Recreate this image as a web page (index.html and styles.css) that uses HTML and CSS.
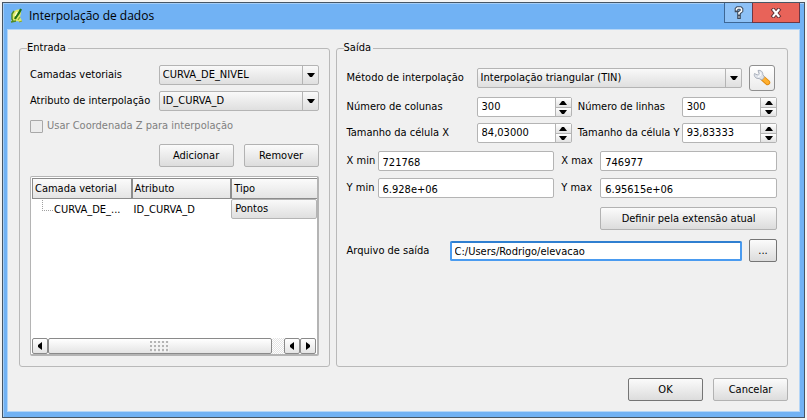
FILE: index.html
```html
<!DOCTYPE html>
<html lang="pt-BR">
<head>
<meta charset="utf-8">
<title>Interpolação de dados</title>
<link rel="stylesheet" href="styles.css">
</head>
<body>
<svg width="0" height="0" class="sprite" aria-hidden="true">
  <symbol id="up" viewBox="0 0 8 4"><path d="M0 4h8L5 0H3z"/></symbol>
  <symbol id="down" viewBox="0 0 8 4"><path d="M0 0h8L5 4H3z"/></symbol>
  <symbol id="left" viewBox="0 0 4 8"><path d="M4 0v8L0 5V3z"/></symbol>
  <symbol id="right" viewBox="0 0 4 8"><path d="M0 0v8l4-3V3z"/></symbol>
</svg>
<main class="window">
  <header class="titlebar">
    <svg class="app-icon" viewBox="0 0 14 16" aria-hidden="true">
      <path d="M3 4l3-2 5-1v4l-1 4 2 4-2 1-3-1-3 1-3 0 1-3 0-4z" fill="#dfe96a"/>
      <path d="M4 3L2 6l0 5 1 2M1 14l5-1" fill="none" stroke="#4f8a26" stroke-width="1.4"/>
      <path d="M11 1L9 5 6 9l-1 2" fill="none" stroke="#1f7012" stroke-width="2.2"/>
      <path d="M7 4L5 8" stroke="#fbfdd0" stroke-width="1.4"/>
      <path d="M8 12l2-3M9 14l3-1" stroke="#86a832" stroke-width="1.2"/>
    </svg>
    <h1 class="title">Interpolação de dados</h1>
    <div class="caption">
      <button type="button" class="cap help" aria-label="Ajuda">
        <svg viewBox="0 0 10 13" width="10" height="13"><path d="M2.500 4.500V3l1-1h3l1 1v2L5 7v1.500M5 10.500v1" fill="none" stroke="#3c4a5c" stroke-width="3.600" stroke-linecap="square"/><path d="M2.500 4.500V3l1-1h3l1 1v2L5 7v1.500M5 10.500v1" fill="none" stroke="#fff" stroke-width="1.600"/></svg>
      </button>
      <button type="button" class="cap close" aria-label="Fechar">
        <svg viewBox="0 0 12 10" width="12" height="10"><path d="M3.500 2l5 6M8.500 2l-5 6" stroke="#5d2f35" stroke-width="4" stroke-linecap="square"/><path d="M3.500 2l5 6M8.500 2l-5 6" stroke="#fff" stroke-width="2.200" stroke-linecap="square"/></svg>
      </button>
    </div>
  </header>
  <form class="content">
    <div class="panels">
      <fieldset class="group">
        <legend>Entrada</legend>
        <div class="input-rows">
          <label for="layer">Camadas vetoriais</label>
          <span class="combo"><select id="layer"><option>CURVA_DE_NIVEL</option></select><svg class="arrow"><use href="#down"/></svg></span>
          <label for="attr">Atributo de interpolação</label>
          <span class="combo"><select id="attr"><option>ID_CURVA_D</option></select><svg class="arrow"><use href="#down"/></svg></span>
        </div>
        <label class="check"><input type="checkbox" disabled>Usar Coordenada Z para interpolação</label>
        <div class="actions">
          <button type="button" class="btn">Adicionar</button>
          <button type="button" class="btn">Remover</button>
        </div>
        <div class="tree">
          <table>
            <thead><tr><th>Camada vetorial</th><th>Atributo</th><th>Tipo</th></tr></thead>
            <tbody><tr><td class="branch">CURVA_DE_...</td><td>ID_CURVA_D</td><td class="type"><select aria-label="Tipo"><option>Pontos</option></select></td></tr></tbody>
          </table>
          <div class="scroll">
            <button type="button" class="step" aria-label="Rolar para a esquerda"><svg><use href="#left"/></svg></button>
            <div class="thumb"><i class="grip"></i></div>
            <div class="track"></div>
            <button type="button" class="step" aria-label="Voltar"><svg><use href="#left"/></svg></button>
            <button type="button" class="step" aria-label="Rolar para a direita"><svg><use href="#right"/></svg></button>
          </div>
        </div>
      </fieldset>
      <fieldset class="group">
        <legend>Saída</legend>
        <div class="row method">
          <label for="method">Método de interpolação</label>
          <span class="combo"><select id="method"><option>Interpolação triangular (TIN)</option></select><svg class="arrow"><use href="#down"/></svg></span>
          <button type="button" class="tool" aria-label="Configurar">
            <svg viewBox="0 0 18 18" width="18" height="18">
              <path d="M10 9.500l4.500 4" stroke="#e08a10" stroke-width="5.400" stroke-linecap="round"/>
              <path d="M10 9.300l4.500 4" stroke="#ffb02e" stroke-width="3.600" stroke-linecap="round"/>
              <path d="M5 1.500L6 4.500 4.500 6 1.500 4.500C.5 7.500 3 10 6 9.500L9 11l2.500-3L9.800 5.500C10 3 8 .8 5 1.500z" fill="#dfe3ea" stroke="#a3a9b5" stroke-width=".9"/>
              <path d="M7.500 3.500L8 6 5 8" fill="none" stroke="#fff"/>
            </svg>
          </button>
        </div>
        <div class="spin-grid">
          <label for="cols">Número de colunas</label>
          <span class="spin"><input id="cols" value="300"><span class="steps"><button type="button" aria-label="Aumentar"><svg><use href="#up"/></svg></button><button type="button" aria-label="Diminuir"><svg><use href="#down"/></svg></button></span></span>
          <label for="lines">Número de linhas</label>
          <span class="spin"><input id="lines" value="300"><span class="steps"><button type="button" aria-label="Aumentar"><svg><use href="#up"/></svg></button><button type="button" aria-label="Diminuir"><svg><use href="#down"/></svg></button></span></span>
          <label for="cellx">Tamanho da célula X</label>
          <span class="spin"><input id="cellx" value="84,03000"><span class="steps"><button type="button" aria-label="Aumentar"><svg><use href="#up"/></svg></button><button type="button" aria-label="Diminuir"><svg><use href="#down"/></svg></button></span></span>
          <label for="celly">Tamanho da célula Y</label>
          <span class="spin"><input id="celly" value="93,83333"><span class="steps"><button type="button" aria-label="Aumentar"><svg><use href="#up"/></svg></button><button type="button" aria-label="Diminuir"><svg><use href="#down"/></svg></button></span></span>
        </div>
        <div class="extent-grid">
          <label for="xmin">X min</label><input class="field" id="xmin" value="721768">
          <label for="xmax">X max</label><input class="field" id="xmax" value="746977">
          <label for="ymin">Y min</label><input class="field" id="ymin" value="6.928e+06">
          <label for="ymax">Y max</label><input class="field" id="ymax" value="6.95615e+06">
          <button type="button" class="btn extent">Definir pela extensão atual</button>
        </div>
        <div class="row file">
          <label for="file">Arquivo de saída</label>
          <input class="field active" id="file" value="C:/Users/Rodrigo/elevacao">
          <button type="button" class="btn dark browse">...</button>
        </div>
      </fieldset>
    </div>
    <div class="footer">
      <button type="button" class="btn dark">OK</button>
      <button type="button" class="btn">Cancelar</button>
    </div>
  </form>
</main>
</body>
</html>
```
FILE: styles.css
```css
* { box-sizing: border-box; }
body {
  margin: 0;
  padding: 2px;
  height: 100vh;
  background: #f4f4f4;
  color: #000;
  font: 11px/16px "DejaVu Sans Condensed", "Noto Sans", sans-serif;
}
button, input, select { margin: 0; font: inherit; color: inherit; }
svg { display: block; }
.sprite { position: absolute; }

.window {
  display: flex;
  flex-direction: column;
  height: calc(100vh - 4px);
  padding: 0 4px 5px;
  background: #71b2f4;
  border: 1px solid #465665;
  box-shadow: inset 1px 1px #a5cdf5;
}
.titlebar { display: flex; height: 26px; padding-left: 3px; }
.app-icon { width: 14px; height: 16px; margin-top: 5px; }
.title {
  flex: 1;
  margin: 0 0 0 5px;
  font: 12px/26px "Open Sans", sans-serif;
}
.caption { display: flex; height: 20px; }
.cap {
  display: flex;
  align-items: center;
  justify-content: center;
  padding: 0;
  border: 1px solid #3d6795;
  border-top: 0;
}
.help { width: 28px; background: #8dc1f6; border-right: 0; }
.close { width: 48px; background: #e86359; border-color: #6d3745; }

.content {
  flex: 1;
  display: flex;
  flex-direction: column;
  padding: 12px 11px 10px;
  background: #f0f0f0;
  border: 1px solid #b5d6f7;
}
.panels { flex: 1; display: grid; grid-template-columns: 311fr 453fr; gap: 6px; }
.group {
  display: flex;
  flex-direction: column;
  min-width: 0;
  margin: 0;
  padding: 11px 10px 10px;
  border: 1px solid #b9b9b9;
  border-radius: 3px;
}
.group legend { margin-left: -3px; padding: 0 2px 0 0; line-height: 12px; }

.input-rows {
  display: grid;
  grid-template-columns: 129fr 160fr;
  align-items: center;
  row-gap: 6px;
}
.combo { position: relative; display: block; min-width: 0; }
.combo select, .type select {
  display: block;
  width: 100%;
  height: 20px;
  padding: 0 18px 0 3px;
  appearance: none;
  border: 1px solid #b4b4b4;
  border-radius: 2px;
  background: linear-gradient(#f9f9f9, #dfdfdf);
}
.arrow {
  position: absolute;
  top: 1px;
  right: 0;
  width: 17px;
  height: 18px;
  padding: 7px 4px;
  border-left: 1px solid #b4b4b4;
  pointer-events: none;
}
.check { display: flex; align-items: center; gap: 4px; margin-top: 7px; color: #808080; }
.check input {
  width: 13px;
  height: 13px;
  appearance: none;
  border: 1px solid #a8a8a8;
  border-radius: 1px;
  background: #ececec;
}
.actions { display: flex; justify-content: flex-end; gap: 10px; margin-top: 10px; }
.btn {
  width: 75px;
  height: 23px;
  padding: 0;
  border: 1px solid #b2b2b2;
  border-radius: 2px;
  background: linear-gradient(#fbfbfb, #dcdcdc);
}
.dark { border-color: #757575; }

.tree {
  flex: 1;
  display: flex;
  flex-direction: column;
  justify-content: space-between;
  margin-top: 9px;
  padding: 1px 0 0 1px;
  background: #fff;
  border: 1px solid #b4b4b4;
  border-width: 1px 2px 2px 1px;
  border-radius: 2px;
}
.tree table { width: 100%; table-layout: fixed; border-collapse: separate; border-spacing: 0; }
.tree th {
  height: 21px;
  padding: 0 0 0 2px;
  text-align: left;
  font-weight: normal;
  background: linear-gradient(#fbfbfb, #e4e4e4);
  border: 1px solid #8c8c8c;
  border-right: 0;
}
.tree th:nth-child(-n+2) { width: 35%; border-right: 1px solid #8c8c8c; }
.tree th:last-child { width: 30%; }
.tree td { height: 20px; padding: 2px 0 0 2px; white-space: nowrap; }
.tree .branch { padding-left: 22px; position: relative; }
.branch::before {
  content: "";
  position: absolute;
  left: 10px;
  top: 1px;
  width: 10px;
  height: 10px;
  border-left: 1px dotted #a0a0a0;
  border-bottom: 1px dotted #a0a0a0;
}
.tree .type { padding: 0; }
.scroll { display: flex; height: 16px; margin-right: 1px; }
.step, .thumb {
  display: flex;
  align-items: center;
  justify-content: center;
  border: 1px solid #8a8a8a;
  border-radius: 2px;
  background: linear-gradient(#fff, #e4e4e4);
}
.step { width: 16px; padding: 0; }
.step svg { width: 4px; height: 8px; }
.thumb { flex: 1; }
.grip {
  width: 19px;
  height: 11px;
  background: repeating-linear-gradient(90deg, transparent 0 2px, #f3f3f3 2px 4px), repeating-linear-gradient(#b4b4b4 0 2px, transparent 2px 4px);
}
.track { width: 12px; background: repeating-conic-gradient(#e4e4e4 0 25%, #fff 0 50%) 0 0 / 2px 2px; }

.row { display: flex; align-items: center; }
.method { height: 26px; }
.method label { width: 130px; }
.method .combo { flex: 1; }
.tool {
  width: 26px;
  height: 26px;
  margin: 0 2px 0 7px;
  padding: 3px;
  border: 1px solid #8f8f8f;
  border-radius: 3px;
  background: linear-gradient(#fff, #ebebeb);
}
.spin-grid {
  display: grid;
  grid-template-columns: 130px 1fr 110px 1fr;
  grid-auto-rows: 20px;
  align-items: center;
  row-gap: 6px;
  margin-top: 6px;
}
.spin-grid label:nth-of-type(even) { margin-left: 6px; }
.spin-grid label, .method label { white-space: nowrap; }
.spin {
  display: flex;
  min-width: 0;
  height: 20px;
  background: #fff;
  border: 1px solid #b4b4b4;
  border-radius: 2px;
}
.spin input { flex: 1; min-width: 0; padding: 0 0 0 4px; border: 0; outline: 0; background: none; }
.steps { display: grid; grid-template-rows: 1fr 1fr; width: 16px; }
.steps button {
  display: flex;
  align-items: center;
  justify-content: center;
  min-height: 0;
  padding: 0;
  border: 0;
  border-left: 1px solid #b4b4b4;
  background: linear-gradient(#fff, #e2e2e2);
}
.steps button + button { border-top: 1px solid #b4b4b4; }
.steps svg { width: 8px; height: 4px; }
.extent-grid {
  display: grid;
  grid-template-columns: 31px 1fr 46px 1fr;
  align-items: center;
  row-gap: 7px;
  margin-top: 8px;
}
.extent-grid label:nth-of-type(even) { margin-left: 7px; }
.field {
  width: 100%;
  min-width: 0;
  height: 20px;
  padding: 2px 4px 0;
  border: 1px solid #b4b4b4;
  border-radius: 2px;
  background: #fff;
}
.active { border: 2px solid #4a9bf0; border-top-color: #2f7fd0; padding: 1px 3px 0; }
.extent { grid-column: 4; width: 100%; margin-top: 2px; }
.file { margin-top: 9px; }
.file label { width: 103px; flex: none; }
.browse { flex: none; width: 28px; margin-left: 7px; }
.footer { display: flex; justify-content: flex-end; gap: 10px; margin-top: 11px; }
```
